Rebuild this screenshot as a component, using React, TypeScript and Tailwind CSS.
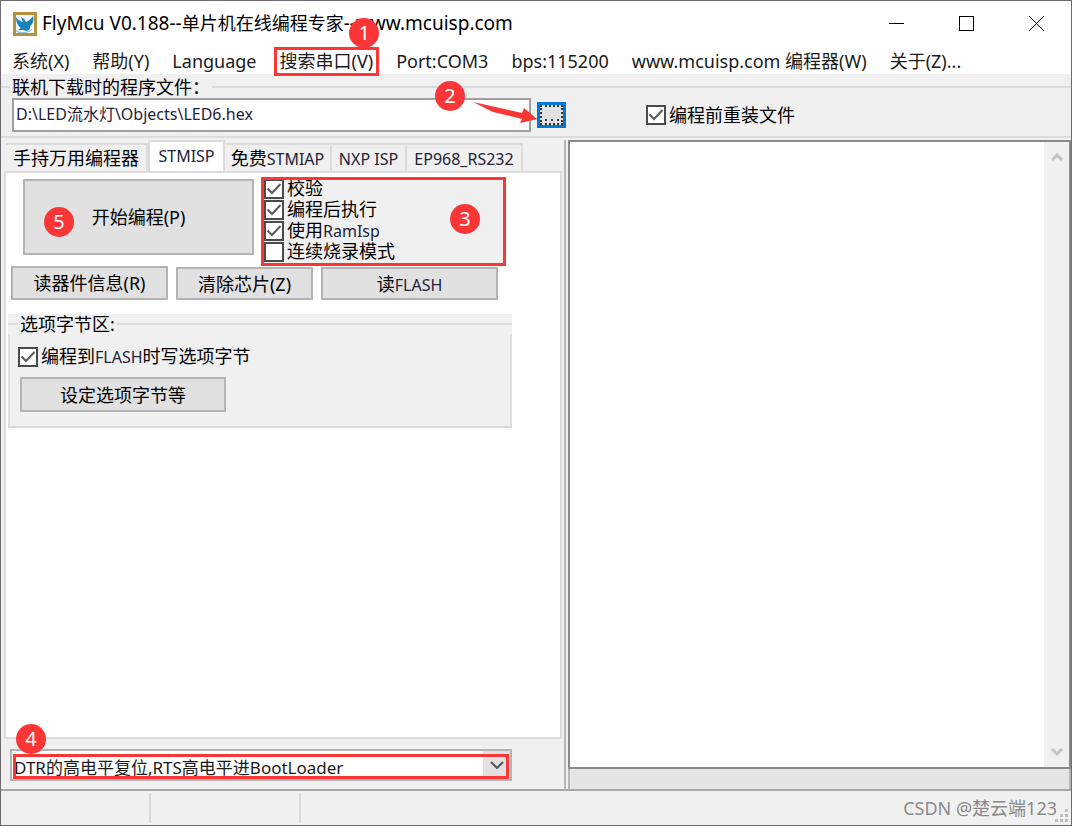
import { useState, type ReactNode } from 'react';

const tabs = [
  { id: 'hand', width: 'w-[142px]', label: '手持万用编程器' },
  { id: 'stmisp', width: 'w-[77px]', label: <Latin>STMISP</Latin> },
  { id: 'stmiap', width: 'w-[107px]', label: <>免费<Latin>STMIAP</Latin></> },
  { id: 'nxp', width: 'w-[75px]', label: <Latin>NXP ISP</Latin> },
  { id: 'ep968', width: 'w-[116px]', label: <Latin>EP968_RS232</Latin> },
];

function Latin({ children }: { children: ReactNode }) {
  return <span className="text-[16px] text-[#22223a]">{children}</span>;
}

function Badge({ n, className }: { n: number; className: string }) {
  return (
    <span className={`absolute z-20 flex h-[30px] w-[30px] items-center justify-center rounded-full bg-[#fc3636] text-[20px] leading-none text-white ${className}`}>
      {n}
    </span>
  );
}

function CheckBox({ id, checked = false, children }: { id: string; checked?: boolean; children: ReactNode }) {
  return (
    <div className="flex h-[21px] items-center gap-[3px]">
      <span className="relative flex h-5 w-5 shrink-0">
        <input id={id} type="checkbox" defaultChecked={checked} className="peer h-5 w-5 appearance-none border-2 border-[#4a4a4a] bg-white" />
        <svg viewBox="0 0 20 20" className="pointer-events-none absolute inset-0 hidden h-5 w-5 peer-checked:block" fill="none" stroke="#5a5a5a" strokeWidth="2">
          <path d="M3.5 9.5 L8 14 L16.5 5" />
        </svg>
      </span>
      <label htmlFor={id} className="whitespace-nowrap leading-[21px]">{children}</label>
    </div>
  );
}

function PushButton({ className, children }: { className: string; children: ReactNode }) {
  return (
    <button type="button" className={`border-2 border-[#b4b4b4] bg-[#e1e1e1] leading-none whitespace-nowrap ${className}`}>
      {children}
    </button>
  );
}

function TitleBar() {
  return (
    <header className="flex h-[45px] shrink-0 items-center bg-white">
      <svg viewBox="0 0 24 24" className="ml-3 h-6 w-6">
        <rect width="24" height="24" fill="#b5913c" />
        <rect x="3" y="3" width="18" height="18" fill="#f1f8fb" />
        <path d="M3 5 C5 8 7 9 10 10 L8 5 C11 6 12 8 13 10 C16 9 18 7 20 4 C21 9 20 12 17 14 C18 18 14 20 10 18 L5 18 L8 16 C5 14 3 10 3 5Z" fill="#1683bd" />
        <path d="M3 19 C8 22 15 21 19 17" stroke="#78bcd8" strokeWidth="1" fill="none" />
      </svg>
      <h1 className="ml-[5px] text-[19px] whitespace-nowrap text-black">
        FlyMcu V0.188--<span className="text-[18px]">单片机在线编程专家</span>--www.mcuisp.com
      </h1>
      <div className="ml-auto flex h-full">
        <button type="button" aria-label="Minimize" className="flex w-[70px] items-center justify-center">
          <svg viewBox="0 0 15 15" className="h-[15px] w-[15px]" stroke="#000" shapeRendering="crispEdges"><path d="M0 7.5H15" /></svg>
        </button>
        <button type="button" aria-label="Maximize" className="flex w-[70px] items-center justify-center">
          <svg viewBox="0 0 15 15" className="h-[15px] w-[15px]" stroke="#000" fill="none" shapeRendering="crispEdges"><path d="M0.5 0.5H14.5V14.5H0.5Z" /></svg>
        </button>
        <button type="button" aria-label="Close" className="flex w-[70px] items-center justify-center">
          <svg viewBox="0 0 15 15" className="h-[15px] w-[15px]" stroke="#000"><path d="M0 0L15 15M15 0L0 15" /></svg>
        </button>
      </div>
    </header>
  );
}

function MenuBar() {
  return (
    <nav className="flex h-7 shrink-0 items-center gap-[23px] bg-white pt-[2px] pl-[11px] text-[18px] whitespace-nowrap text-[#1a1a1a]">
      <button type="button">系统(X)</button>
      <button type="button">帮助(Y)</button>
      <button type="button">Language</button>
      <div className="relative">
        <button type="button">搜索串口(V)</button>
        <span className="absolute -inset-x-[6px] -inset-y-px border-[3px] border-[#fc3636]" />
        <Badge n={1} className="-top-[30px] -right-[6px]" />
      </div>
      <button type="button">Port:COM3</button>
      <button type="button">bps:115200</button>
      <button type="button">www.mcuisp.com 编程器(W)</button>
      <button type="button">关于(Z)...</button>
    </nav>
  );
}

function FileRow() {
  return (
    <section className="relative h-[66px] shrink-0 pt-[3px]">
      <div className="flex h-5 items-center">
        <span className="w-[9px] border-t-2 border-[#dcdcdc]" />
        <label htmlFor="hex" className="px-[2px] leading-5">联机下载时的程序文件：</label>
        <span className="flex-1 border-t-2 border-[#dcdcdc]" />
      </div>
      <div className="mt-px flex h-[34px] items-center pl-[11px]">
        <input id="hex" defaultValue="D:\LED流水灯\Objects\LED6.hex" className="h-[34px] w-[519px] border-2 border-[#a0a0a0] bg-white px-[2px] pb-1 text-[16px] text-[#22223a]" />
        <button type="button" aria-label="Browse" className="ml-[6px] h-[26px] w-[29px] border-[3px] border-[#0078d7] bg-[#e1e1e1]">
          <span className="flex h-full items-end justify-center gap-1 border-2 border-dotted border-[#333] pb-[2px]">
            <i className="h-[2px] w-[2px] bg-[#3a3a5a]" />
            <i className="h-[2px] w-[2px] bg-[#3a3a5a]" />
            <i className="h-[2px] w-[2px] bg-[#3a3a5a]" />
          </span>
        </button>
        <div className="ml-20">
          <CheckBox id="reload" checked>编程前重装文件</CheckBox>
        </div>
      </div>
      <div className="mt-1 border-b-2 border-[#dcdcdc]" />
      <Badge n={2} className="top-[7px] left-[434px]" />
      <svg viewBox="0 0 66 26" className="absolute top-[27px] left-[472px] z-10 h-[26px] w-[66px]">
        <path d="M0 1 L49 12 L51 7 L64 18 L47 22 L49 18 L20 11Z" fill="#fc3636" />
      </svg>
    </section>
  );
}

function IspPage() {
  return (
    <div className="flex-1 border-2 border-[#dcdcdc] bg-white pt-1 pl-1">
      <div className="flex pl-[13px]">
        <div className="relative mt-[2px]">
          <PushButton className="h-[76px] w-[231px]">开始编程(P)</PushButton>
          <Badge n={5} className="top-[28px] left-[21px]" />
        </div>
        <div className="relative ml-[7px] h-[89px] w-[245px] bg-[#f0f0f0] pt-px pl-[3px]">
          <CheckBox id="verify" checked>校验</CheckBox>
          <CheckBox id="run" checked>编程后执行</CheckBox>
          <CheckBox id="ramisp" checked>使用<Latin>RamIsp</Latin></CheckBox>
          <CheckBox id="loop">连续烧录模式</CheckBox>
          <span className="pointer-events-none absolute inset-0 border-[3px] border-[#fc3636]" />
          <Badge n={3} className="top-[27px] left-[189px]" />
        </div>
      </div>
      <div className="flex items-end gap-2 pl-px">
        <PushButton className="h-[34px] w-[157px]">读器件信息(R)</PushButton>
        <PushButton className="h-[33px] w-[137px]">清除芯片(Z)</PushButton>
        <PushButton className="h-[33px] w-[177px]">读<Latin>FLASH</Latin></PushButton>
      </div>
      <fieldset className="mt-[14px] -ml-[2px] w-[504px] bg-[#f0f0f0]">
        <div className="flex h-5 items-center">
          <span className="w-[10px] border-t-2 border-[#dcdcdc]" />
          <span className="px-[2px] leading-5">选项字节区:</span>
          <span className="flex-1 border-t-2 border-[#dcdcdc]" />
        </div>
        <div className="flex flex-col items-start gap-[10px] border-2 border-t-0 border-[#dcdcdc] px-2 pt-3 pb-[14px]">
          <CheckBox id="option-bytes" checked>编程到<Latin>FLASH</Latin>时写选项字节</CheckBox>
          <PushButton className="ml-[2px] h-[35px] w-[206px]">设定选项字节等</PushButton>
        </div>
      </fieldset>
    </div>
  );
}

function LeftPane() {
  const [active, setActive] = useState('stmisp');
  return (
    <section className="flex w-[565px] shrink-0 flex-col border-r-2 border-[#b8b8b8] pl-[3px]">
      <div role="tablist" className="flex h-[31px] items-end pl-[2px]">
        {tabs.map((tab) => (
          <button
            key={tab.id}
            type="button"
            role="tab"
            aria-selected={active === tab.id}
            onClick={() => setActive(tab.id)}
            className={`${tab.width} border-2 border-b-0 border-[#dcdcdc] leading-none whitespace-nowrap ${active === tab.id ? 'h-[31px] bg-white pb-1' : 'h-[28px] border-l-0 bg-[#f0f0f0]'}`}
          >
            {tab.label}
          </button>
        ))}
      </div>
      <div className="flex flex-1 pr-[2px]">
        <IspPage />
      </div>
      <div className="relative mt-[10px] mb-2 ml-[6px] h-[32px] w-[502px]">
        <select aria-label="Reset mode" className="h-full w-full appearance-none border-2 border-[#b4b4b4] bg-white pt-1 pl-[2px] text-[17px] text-[#1a1a1a]">
          <option>DTR的高电平复位,RTS高电平进BootLoader</option>
        </select>
        <span className="pointer-events-none absolute top-[2px] right-[2px] flex h-7 w-[27px] items-center justify-center bg-[#e1e1e1]">
          <svg viewBox="0 0 14 8" className="h-2 w-[14px]" fill="none" stroke="#555" strokeWidth="2"><path d="M1 1L7 7L13 1" /></svg>
        </span>
        <span className="pointer-events-none absolute top-[5px] right-[3px] bottom-[2px] left-[3px] border-[3px] border-[#fc3636]" />
        <Badge n={4} className="-top-[25px] left-[6px]" />
      </div>
    </section>
  );
}

function LogPane() {
  return (
    <section className="flex flex-1 flex-col pl-[2px]">
      <div className="flex flex-1 border-2 border-[#8a8a8a] bg-white">
        <textarea aria-label="Log" className="flex-1 resize-none bg-white outline-none" />
        <div className="flex w-[25px] flex-col items-center justify-between bg-[#f0f0f0] py-[10px]">
          <svg viewBox="0 0 12 10" className="h-[10px] w-3" fill="none" stroke="#c2c2c2" strokeWidth="3"><path d="M1 8L6 3L11 8" /></svg>
          <svg viewBox="0 0 12 10" className="h-[10px] w-3" fill="none" stroke="#c2c2c2" strokeWidth="3"><path d="M1 2L6 7L11 2" /></svg>
        </div>
      </div>
      <div className="h-[20px] border-x-2 border-[#b8b8b8] bg-[#e5e5e5]" />
    </section>
  );
}

function StatusBar() {
  return (
    <footer className="relative flex h-9 shrink-0 border-t-2 border-[#a8a8a8] py-[2px]">
      <span className="w-[150px] border-r-2 border-[#dadada]" />
      <span className="w-[150px] border-r-2 border-[#dadada]" />
      <span className="ml-auto self-center pr-[14px] text-[18px] leading-none text-[#8a8a8a]">CSDN @楚云端123</span>
      <svg viewBox="0 0 14 14" className="absolute right-[2px] bottom-[2px] h-[14px] w-[14px]" fill="#bfbfbf">
        <path d="M10 0h3v3h-3zM5 5h3v3H5zM10 5h3v3h-3zM0 10h3v3H0zM5 10h3v3H5zM10 10h3v3h-3z" />
      </svg>
    </footer>
  );
}

export default function App() {
  return (
    <main className="flex h-screen min-h-[600px] flex-col overflow-hidden border border-[#6f6b70] bg-[#f0f0f0] font-['Noto_Sans','Noto_Sans_CJK_SC',sans-serif] text-[18px] text-black">
      <TitleBar />
      <MenuBar />
      <FileRow />
      <div className="flex flex-1">
        <LeftPane />
        <LogPane />
      </div>
      <StatusBar />
    </main>
  );
}
